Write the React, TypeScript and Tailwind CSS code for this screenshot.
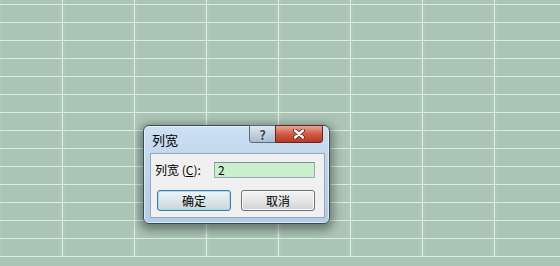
import React from 'react';

const COLS = [63, 72, 72, 72, 72, 72, 72, 72];
const ROWS = Array.from({ length: 15 }, (_, i) => (i === 0 ? 5 : 18));

const Sheet: React.FC = () => (
  <div className="flex flex-col">
    {ROWS.map((h, r) => (
      <div key={r} className="flex" style={{ height: h }}>
        {COLS.map((w, c) => (
          <div
            key={c}
            className="shrink-0 border-r border-b border-[#dcede3] shadow-[inset_-3px_0_0_rgba(255,255,255,0.08),inset_2px_0_0_rgba(255,255,255,0.08)]"
            style={{ width: w }}
          />
        ))}
      </div>
    ))}
  </div>
);

const CloseGlyph = () => (
  <svg width="12" height="10" viewBox="0 0 12 10">
    <path d="M2 1.5 L10 8.5 M10 1.5 L2 8.5" stroke="#5a1a14" strokeWidth="4" strokeLinecap="round" />
    <path d="M2 1.5 L10 8.5 M10 1.5 L2 8.5" stroke="#ffffff" strokeWidth="2.4" strokeLinecap="round" />
  </svg>
);

const ColumnWidthDialog: React.FC = () => (
  <div className="absolute left-[143px] top-[125px] w-[187px] h-[99px] rounded-[6px] border border-[#3b4a55] bg-gradient-to-b from-[#cde0f3] via-[#bcd4ec] to-[#b4cde7] shadow-[0_3px_10px_3px_rgba(0,0,0,0.38),inset_0_0_0_1px_rgba(255,255,255,0.55)] flex flex-col">
    {/* title bar */}
    <div className="flex items-start h-[27px]">
      <span className="pl-[8px] pt-[7px] text-[13px] leading-[14px] text-black">列宽</span>
      <div className="ml-auto mr-[6px] flex">
        <div className="w-[27px] h-[18px] -mt-px flex items-center justify-center rounded-bl-[3px] border border-[#5a6a7c] bg-gradient-to-b from-[#dfe8f2] via-[#c2d0e0] to-[#a9bbd0] text-[13px] font-bold leading-none text-[#3a4550] [text-shadow:0_0_2px_#ffffff]">
          ?
        </div>
        <div className="w-[48px] h-[18px] -mt-px -ml-px flex items-center justify-center rounded-br-[3px] border border-[#5b2a22] bg-gradient-to-b from-[#e8a699] via-[#cf5a45] to-[#b7392a]">
          <CloseGlyph />
        </div>
      </div>
    </div>

    {/* client area */}
    <div className="ml-[6px] mr-[4px] h-[65px] border border-[#95a8bd] bg-[#f0f0f0] flex flex-col">
      <div className="flex items-center mt-[8px] h-[16px]">
        <span className="ml-[4px] text-[12px] leading-none text-black">
          列宽 (<span className="underline">C</span>):
        </span>
        <div className="ml-auto mr-[9px] w-[101px] h-[16px] border border-[#9aaab4] border-t-[#7f8e98] bg-[#c9efcb] pl-[3px] text-[12px] leading-[14px] text-black">
          2
        </div>
      </div>
      <div className="flex gap-[10px] mt-[12px] ml-[6px]">
        <button className="w-[74px] h-[21px] rounded-[3px] border border-[#3c7fa6] bg-gradient-to-b from-[#eef5f8] via-[#dbe6ea] to-[#c8d6dc] shadow-[inset_0_0_0_1px_#a7dcef] text-[12px] leading-none text-black">
          确定
        </button>
        <button className="w-[74px] h-[21px] rounded-[3px] border border-[#707070] bg-gradient-to-b from-[#f4f4f4] via-[#e6e6e6] to-[#d2d2d2] shadow-[inset_0_0_0_1px_#fbfbfb] text-[12px] leading-none text-black">
          取消
        </button>
      </div>
    </div>
  </div>
);

export default function App() {
  return (
    <div
      className="relative w-[560px] h-[266px] overflow-hidden bg-[#aac4b5]"
      style={{ fontFamily: '"Noto Sans CJK SC", "Noto Sans", sans-serif' }}
    >
      <Sheet />
      <ColumnWidthDialog />
    </div>
  );
}
